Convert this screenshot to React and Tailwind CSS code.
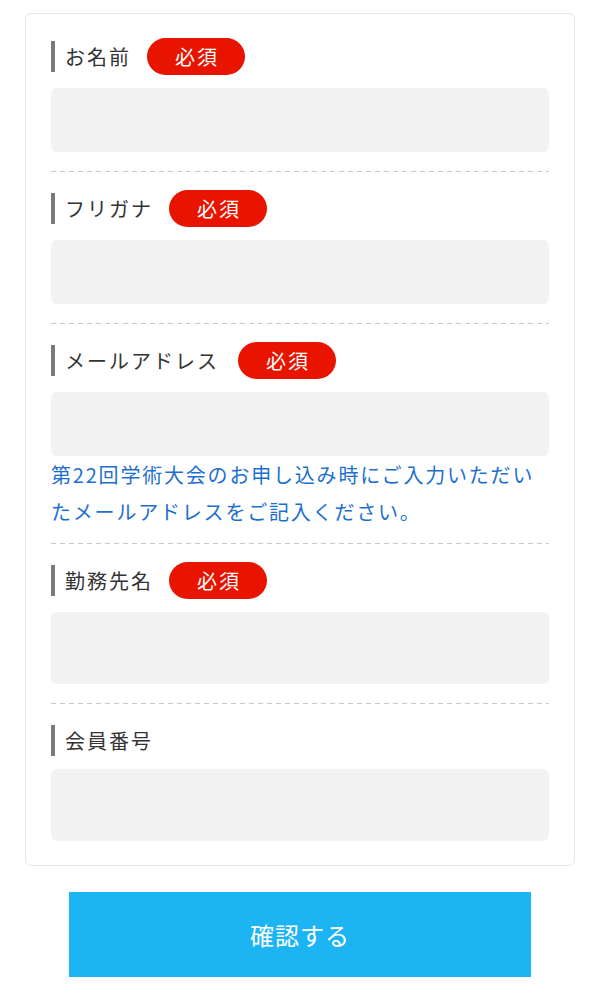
import React from "react";

const font = { fontFamily: '"Noto Sans CJK JP", "Noto Sans", sans-serif' };

function Badge() {
  return (
    <span className="ml-4 flex h-[37px] w-[98px] items-center justify-center rounded-full bg-[#e81400] pl-[2px] text-[20px] tracking-[2px] text-white">
      必須
    </span>
  );
}

function Label({ text, required, extra }) {
  return (
    <div className="flex h-[37px] items-center">
      <span className="h-[31px] w-[4px] bg-[#7a7a7a]" />
      <span className={`ml-[10px] text-[20px] tracking-[2px] text-[#333333] ${extra ? "mr-[3px]" : ""}`}>{text}</span>
      {required && <Badge />}
    </div>
  );
}

function Divider({ top = 19 }) {
  return (
    <div
      className={`${top === 13 ? "mt-[13px]" : "mt-[19px]"} mb-[18px] h-px bg-[repeating-linear-gradient(to_right,#c9c9c9_0_5px,transparent_5px_9px)]`}
    />
  );
}

export default function App() {
  return (
    <div className="min-h-[1000px] w-[600px] bg-white" style={font}>
      <div className="pt-[13px]">
        <div className="mx-[25px] rounded-[6px] border border-[#e6e6e6] px-[25px] pt-[24px] pb-[24px]">
          <Label text="お名前" required />
          <div className="mt-[13px] h-[64px] rounded-[6px] bg-[#f2f2f2]" />
          <Divider />

          <Label text="フリガナ" required />
          <div className="mt-[13px] h-[64px] rounded-[6px] bg-[#f2f2f2]" />
          <Divider />

          <Label text="メールアドレス" required extra />
          <div className="mt-[13px] h-[64px] rounded-[6px] bg-[#f2f2f2]" />
          <p className="text-[20px] leading-[37px] tracking-[1.8px] text-[#1d6fcf]">
            第22回学術大会のお申し込み時にご入力いただい
            <br />
            たメールアドレスをご記入ください。
          </p>
          <Divider top={13} />

          <Label text="勤務先名" required />
          <div className="mt-[13px] h-[72px] rounded-[6px] bg-[#f2f2f2]" />
          <Divider />

          <Label text="会員番号" />
          <div className="mt-[10px] h-[72px] rounded-[6px] bg-[#f2f2f2]" />
        </div>
      </div>
      <div className="mx-auto mt-[26px] flex h-[85px] w-[462px] items-center justify-center bg-[#1db4f3] text-[24px] tracking-[1px] text-white">
        確認する
      </div>
    </div>
  );
}
